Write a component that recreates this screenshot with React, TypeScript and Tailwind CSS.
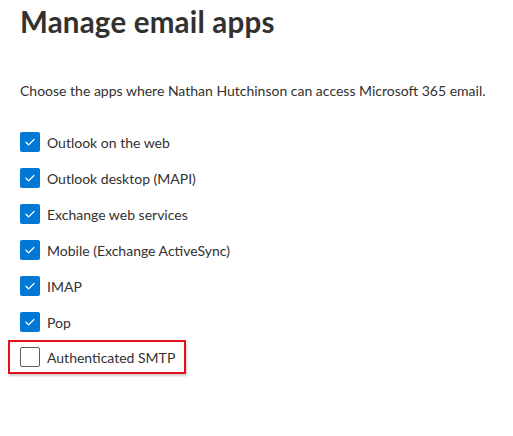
const apps = [
  { name: 'Outlook on the web', enabled: true },
  { name: 'Outlook desktop (MAPI)', enabled: true },
  { name: 'Exchange web services', enabled: true },
  { name: 'Mobile (Exchange ActiveSync)', enabled: true },
  { name: 'IMAP', enabled: true },
  { name: 'Pop', enabled: true },
  { name: 'Authenticated SMTP', enabled: false },
];

function CheckBox({ checked }: { checked: boolean }) {
  if (!checked) {
    return <span className="block w-5 h-5 rounded-[2px] border border-[#605e5c] bg-white" />;
  }
  return (
    <span className="flex items-center justify-center w-5 h-5 rounded-[2px] bg-[#0078d4]">
      <svg width="12" height="12" viewBox="0 0 12 12" fill="none">
        <path d="M2 6.3l2.6 2.6L10 3.5" stroke="white" strokeWidth="1.3" strokeLinecap="round" strokeLinejoin="round" />
      </svg>
    </span>
  );
}

export default function App() {
  return (
    <div className="w-[513px] h-[436px] bg-white text-[#323130] font-['Lato',sans-serif] pl-5 pt-[2px]">
      <h1 className="text-[29.5px] leading-[40px] font-bold tracking-[0.2px]">Manage email apps</h1>
      <p className="mt-[39px] text-[14px] leading-5">
        Choose the apps where Nathan Hutchinson can access Microsoft 365 email.
      </p>
      <div className="mt-[23px] flex flex-col">
        {apps.map((app) =>
          app.enabled ? (
            <label key={app.name} className="flex items-center gap-[7px] h-9 text-[14px]">
              <CheckBox checked />
              <span>{app.name}</span>
            </label>
          ) : (
            <div
              key={app.name}
              className="-ml-3 w-[178px] h-[34px] flex items-center gap-[7px] pl-[10px] border-2 border-[#e3101a] shadow-[1px_2px_2px_rgba(0,0,0,0.2)] text-[14px]"
            >
              <CheckBox checked={false} />
              <span>{app.name}</span>
            </div>
          )
        )}
      </div>
    </div>
  );
}
